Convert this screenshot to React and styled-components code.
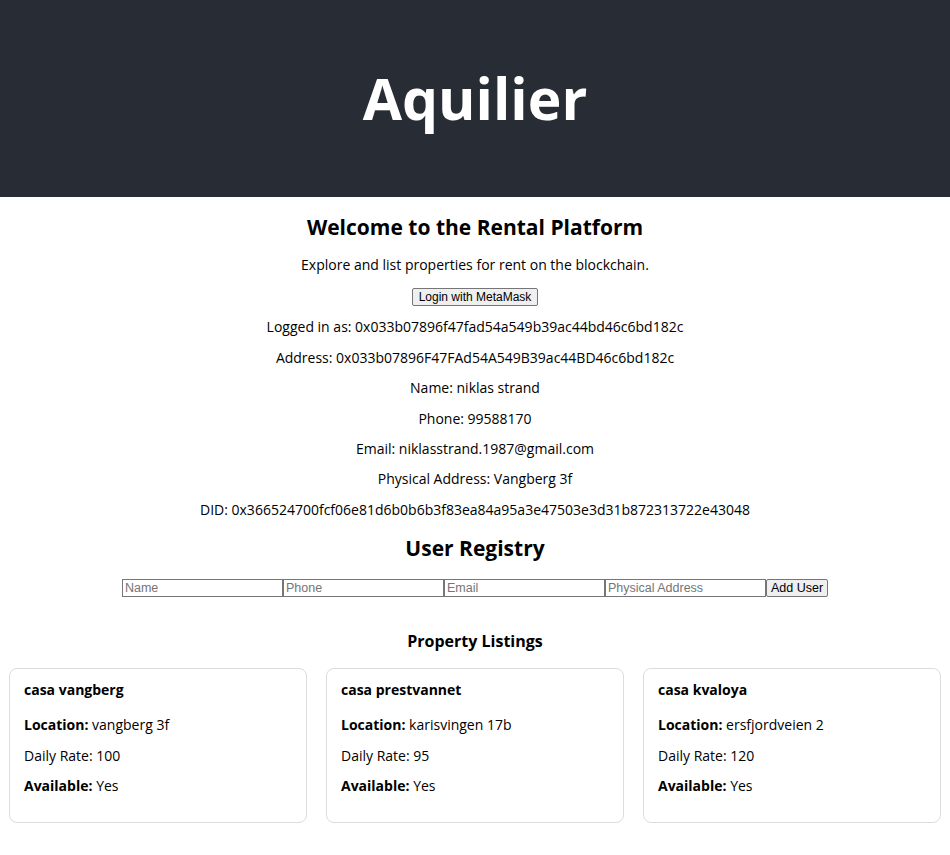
import React from "react";
import styled, { createGlobalStyle } from "styled-components";

const GlobalStyle = createGlobalStyle`
  body {
    margin: 0;
    background: #ffffff;
    color: #000000;
    font-family: "Open Sans", "Noto Sans", sans-serif;
  }
`;

const properties = [
  { name: "casa vangberg", location: "vangberg 3f", rate: 100, available: true },
  { name: "casa prestvannet", location: "karisvingen 17b", rate: 95, available: true },
  { name: "casa kvaloya", location: "ersfjordveien 2", rate: 120, available: true },
];

function App() {
  return (
    <>
      <GlobalStyle />
      <Header>
        <h1>Aquilier</h1>
      </Header>
      <Main>
        <Title>Welcome to the Rental Platform</Title>
        <Info>Explore and list properties for rent on the blockchain.</Info>
        <LoginButton>Login with MetaMask</LoginButton>
        <Info>Logged in as: 0x033b07896f47fad54a549b39ac44bd46c6bd182c</Info>
        <Info>Address: 0x033b07896F47FAd54A549B39ac44BD46c6bd182c</Info>
        <Info>Name: niklas strand</Info>
        <Info>Phone: 99588170</Info>
        <Info>Email: niklasstrand.1987@gmail.com</Info>
        <Info>Physical Address: Vangberg 3f</Info>
        <Info>DID: 0x366524700fcf06e81d6b0b6b3f83ea84a95a3e47503e3d31b872313722e43048</Info>
        <Title>User Registry</Title>
        <RegistryForm>
          <Field placeholder="Name" />
          <Field placeholder="Phone" />
          <Field placeholder="Email" />
          <Field placeholder="Physical Address" />
          <AddButton type="button">Add User</AddButton>
        </RegistryForm>
        <SectionTitle>Property Listings</SectionTitle>
      </Main>
      <Listings>
        {properties.map((p) => (
          <Card key={p.name}>
            <CardTitle>{p.name}</CardTitle>
            <CardLine>
              <strong>Location:</strong> {p.location}
            </CardLine>
            <CardLine>Daily Rate: {p.rate}</CardLine>
            <CardLine>
              <strong>Available:</strong> {p.available ? "Yes" : "No"}
            </CardLine>
          </Card>
        ))}
      </Listings>
    </>
  );
}

export default App;

const Header = styled.header`
  display: flex;
  align-items: center;
  justify-content: center;
  height: 197px;
  background-color: #282c34;
  color: #ffffff;

  > h1 {
    margin: 0;
    font-size: 57px;
    font-weight: 700;
    line-height: 1;
  }
`;

const Main = styled.main`
  display: flex;
  flex-direction: column;
  align-items: center;
  padding-top: 14px;
`;

const Title = styled.h2`
  margin: 4px 0 18px;
  font-size: 21px;
  font-weight: 700;
  line-height: 24px;
`;

const Info = styled.p`
  margin: 0 0 14px;
  font-size: 14px;
  line-height: 16.4px;
`;

const LoginButton = styled.button`
  margin: 1px 0 13px;
  height: 18px;
  padding: 0 6px;
  font-family: "Liberation Sans", Arial, sans-serif;
  font-size: 12px;
  background: #efefef;
  border: 1px solid #767676;
  border-radius: 2px;
  color: #000;
`;

const RegistryForm = styled.div`
  display: flex;
  margin-top: 1px;
`;

const Field = styled.input`
  box-sizing: border-box;
  width: 161px;
  height: 18px;
  margin: 0;
  padding: 0 2px;
  border: 1px solid #767676;
  font-family: "Liberation Sans", Arial, sans-serif;
  font-size: 12.5px;

  &::placeholder {
    color: #757575;
  }
`;

const AddButton = styled.button`
  box-sizing: border-box;
  height: 18px;
  margin: 0;
  padding: 0 4px;
  font-family: "Liberation Sans", Arial, sans-serif;
  font-size: 12.5px;
  background: #efefef;
  border: 1px solid #767676;
  border-radius: 2px;
  color: #000;
`;

const SectionTitle = styled.h3`
  margin: 35px 0 18px;
  font-size: 16px;
  font-weight: 700;
  line-height: 18px;
`;

const Listings = styled.section`
  display: flex;
  gap: 19px;
  padding: 0 9px 30px;
`;

const Card = styled.div`
  flex: 1;
  box-sizing: border-box;
  height: 155px;
  padding: 13px 14px 14px;
  border: 1px solid #dcdcdc;
  border-radius: 8px;
`;

const CardTitle = styled.h4`
  margin: 0 0 19px;
  font-size: 14px;
  font-weight: 700;
  line-height: 16px;
`;

const CardLine = styled.p`
  margin: 0 0 14.5px;
  font-size: 14px;
  line-height: 16px;

  > strong {
    font-weight: 700;
  }
`;
